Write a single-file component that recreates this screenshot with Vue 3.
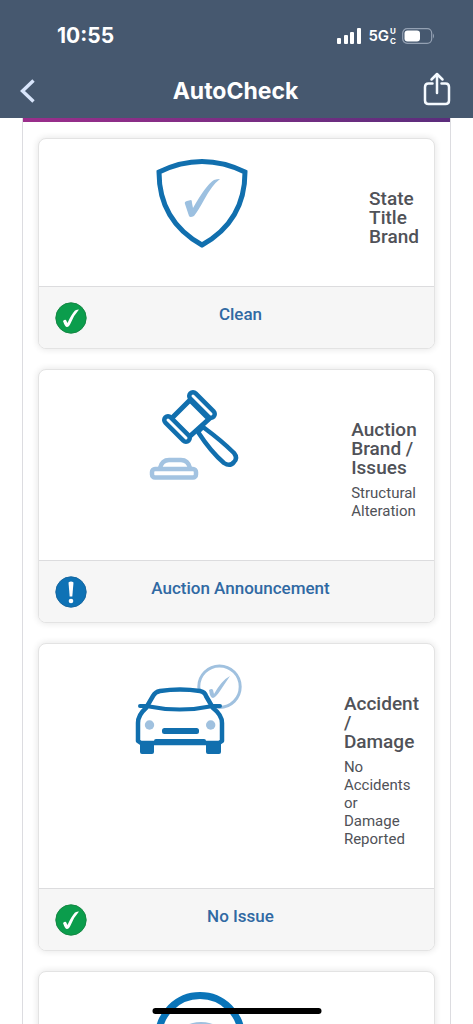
<script setup>
const cards = [
  { icon: 'shield', title: 'State Title Brand', detail: '', status: 'Clean', ok: true },
  { icon: 'gavel', title: 'Auction Brand / Issues', detail: 'Structural Alteration', status: 'Auction Announcement', ok: false },
  { icon: 'car', title: 'Accident / Damage', detail: 'No Accidents or Damage Reported', status: 'No Issue', ok: true },
  { icon: 'gauge' }
]
</script>

<template>
  <div class="screen">
    <header class="header">
      <div class="statusbar">
        <span class="time">10:55</span>
        <div class="indicators">
          <svg class="signal" viewBox="0 0 24 16" aria-hidden="true">
            <rect x="0" y="10" width="4" height="6" rx="1" />
            <rect x="7" y="7" width="4" height="9" rx="1" />
            <rect x="13" y="4" width="4" height="12" rx="1" />
            <rect x="20" y="0" width="4" height="16" rx="1" />
          </svg>
          <span class="network">5G</span>
          <span class="band"><span>U</span><span>C</span></span>
          <svg class="battery" viewBox="0 0 34 16" aria-hidden="true">
            <rect x="0.7" y="0.7" width="29" height="14.6" rx="4.5" fill="none" stroke="#94a1b3" stroke-width="1.2" />
            <rect x="2.5" y="2.5" width="15.5" height="11" rx="3" fill="#fff" />
            <path d="M31 5.5Q33 8 31 10.5Z" fill="#94a1b3" />
          </svg>
        </div>
      </div>
      <nav class="navbar">
        <button class="navbtn" type="button" aria-label="Back">
          <svg class="chevron" viewBox="0 0 16 24"><path d="M13.5 1.5L2.5 12L13.5 22.5" fill="none" stroke="#d8e5fb" stroke-width="3.4" /></svg>
        </button>
        <h1 class="heading">AutoCheck</h1>
        <button class="navbtn end" type="button" aria-label="Share">
          <svg class="share" viewBox="0 0 28 34">
            <g fill="none" stroke="#f5faff" stroke-width="2.5" stroke-linecap="round" stroke-linejoin="round">
              <path d="M9.5 11.5H5.5Q2 11.5 2 15V28.5Q2 32 5.5 32H22.5Q26 32 26 28.5V15Q26 11.5 22.5 11.5H18.5" />
              <path d="M14 21V2M8.5 7.5L14 2L19.5 7.5" />
            </g>
          </svg>
        </button>
      </nav>
    </header>

    <main class="panel">
      <section v-for="card in cards" :key="card.icon" class="card">
        <div class="body" :class="{ plain: !card.title }">
          <div class="picture">
            <svg v-if="card.icon === 'shield'" class="icon" viewBox="0 0 110 104" aria-hidden="true">
              <path d="M12 24Q55 3 98 24Q98 73 55 97Q12 73 12 24Z" fill="none" stroke="#116fae" stroke-width="5" />
              <path d="M38 56Q37 54 40 53L44 52Q45 52 45 55L46 60Q59 37 67 32Q70 31 73 31Q65 37 57 52Q51 63 47 68Q43 70 42 68Z" fill="#9cc0e0" />
            </svg>
            <svg v-else-if="card.icon === 'gavel'" class="icon" viewBox="0 0 110 104" aria-hidden="true">
              <path d="M60 53L65 48Q84 62 96 74Q100 79 96 83Q92 88 86 84Q73 73 60 53Z" fill="#fff" stroke="#116fae" stroke-width="4.5" stroke-linejoin="round" />
              <path d="M52 21L71 40L51 58L33 40Z" fill="#fff" stroke="#116fae" stroke-width="5" />
              <g fill="none" stroke-linecap="round">
                <path d="M55 17L73 35M30 41L48 59" stroke="#116fae" stroke-width="12" />
                <path d="M55 17L73 35M30 41L48 59" stroke="#fff" stroke-width="3" />
              </g>
              <g fill="none" stroke="#a3c3e1" stroke-width="4.5">
                <rect x="14" y="90" width="44" height="8.5" rx="3" />
                <path d="M22 89Q24 81 31 81H43Q50 81 52 89" />
              </g>
            </svg>
            <svg v-else-if="card.icon === 'car'" class="icon" viewBox="0 0 110 104" aria-hidden="true">
              <circle cx="85.5" cy="33.7" r="20.7" fill="none" stroke="#a0c1df" stroke-width="3" />
              <path d="M75 37Q78 35 79 37L80 41Q88 27 96 23Q92 29 86 38Q82 44 79 45Q76 45 75 37Z" fill="#a0c1df" />
              <path d="M12 55Q4 62 4 70V88L7 90H85L88 88V70Q88 62 79 55L72 43Q71 39 66 38Q46 35 26 38Q21 39 19 43Z" fill="#fff" stroke="#116fae" stroke-width="4.5" stroke-linejoin="round" />
              <path d="M6 53H12Q46 60 79 53H86" fill="none" stroke="#116fae" stroke-width="4" stroke-linecap="round" stroke-linejoin="round" />
              <rect x="28" y="75" width="37" height="6" rx="2.5" fill="#116fae" />
              <rect x="20" y="86" width="52" height="6" rx="2" fill="#116fae" />
              <path d="M6 89H20V99Q20 101 18 101H8Q6 101 6 99ZM72 89H87V99Q87 101 85 101H74Q72 101 72 99Z" fill="#116fae" />
              <circle cx="15.5" cy="72" r="4.7" fill="#a0c1df" />
              <circle cx="76.7" cy="72" r="4.7" fill="#a0c1df" />
            </svg>
            <svg v-else class="icon" viewBox="0 0 110 104" aria-hidden="true">
              <circle cx="55" cy="56" r="41.5" fill="none" stroke="#0a74b8" stroke-width="7" />
              <ellipse cx="56" cy="56" rx="24" ry="15" fill="#a0c1df" />
            </svg>
          </div>
          <div v-if="card.title" class="copy">
            <h2 class="title">{{ card.title }}</h2>
            <p v-if="card.detail" class="detail">{{ card.detail }}</p>
          </div>
        </div>
        <footer v-if="card.status" class="footer">
          <svg class="badge" viewBox="0 0 32 32" aria-hidden="true">
            <template v-if="card.ok">
              <circle cx="16" cy="16" r="15.2" fill="#0b9d4c" stroke="#168744" stroke-width="1" />
              <path d="M8 19Q10 17 11 18L12.5 21Q16 13 20 8.5Q22 7.5 24 7.5Q19 13 16 20.5Q14 25 12 25Q10 25 8 19Z" fill="#fff" />
            </template>
            <template v-else>
              <circle cx="16" cy="16" r="15.2" fill="#0e72b5" stroke="#1767a0" stroke-width="1" />
              <path d="M13.5 6.5Q16 4.5 18.5 6.5L17.3 20.5H14.7Z" fill="#fff" />
              <circle cx="16" cy="25" r="2.3" fill="#fff" />
            </template>
          </svg>
          <a class="status" href="#">{{ card.status }}</a>
        </footer>
      </section>
    </main>
    <div class="home"></div>
  </div>
</template>

<style>
body { margin: 0; background: #fff; }
</style>

<style scoped>
.screen { position: relative; height: 100vh; overflow: hidden; background: #fff; font-family: Roboto, sans-serif; }
.header { box-sizing: border-box; height: 118px; padding-top: 20px; background: #46586f; color: #fff; font-family: Inter, sans-serif; }
.statusbar { display: flex; align-items: center; justify-content: space-between; height: 32px; padding: 0 37px 0 57px; }
.time { font-size: 21px; font-weight: 700; line-height: 24px; }
.indicators { display: flex; align-items: center; }
.signal { width: 24px; height: 16px; margin-right: 7px; fill: #fff; }
.network { font-size: 15px; font-weight: 600; line-height: 20px; }
.band { display: flex; flex-direction: column; margin: 0 6px 0 1px; font-size: 8px; font-weight: 700; line-height: 10px; }
.battery { width: 34px; height: 16px; }
.navbar { display: grid; grid-template-columns: 1fr auto 1fr; align-items: center; height: 66px; padding: 4px 22px 0 20px; box-sizing: border-box; margin-top: 4px; }
.navbtn { display: flex; justify-self: start; padding: 0; border: 0; background: none; }
.end { justify-self: end; padding-bottom: 4px; }
.chevron { width: 16px; height: 24px; }
.share { width: 28px; height: 34px; }
.heading { margin: 0; font-size: 23px; font-weight: 700; line-height: 30px; }
.panel { margin: 0 22px; padding: 16px 15px 0; border: 1px solid #dcdce0; border-top: 0; min-height: 100%; }
.panel::before { content: ""; display: block; height: 4px; margin: -16px -15px 16px; background: linear-gradient(90deg, #9b2e8b, #5b2d7c); }
.card { margin-bottom: 20px; border: 1px solid #e3e3e3; border-radius: 8px; background: #fff; box-shadow: 0 0 6px 1px rgba(0, 0, 0, 0.09); overflow: hidden; }
.body { display: flex; align-items: flex-start; }
.plain { padding-right: 70px; min-height: 148px; }
.picture { flex: 1; display: flex; justify-content: center; padding: 9px 4px 0 0; }
.icon { width: 110px; height: 104px; }
.copy { width: min-content; padding: 50px 15px 40px 0; color: #505258; }
.title { margin: 0; font-size: 19px; font-weight: 500; line-height: 19px; }
.detail { margin: 7px 0 0; padding-right: 3px; font-size: 15px; line-height: 18px; }
.footer { display: flex; align-items: flex-start; box-sizing: border-box; height: 62px; padding: 15px 40px 0 16px; border-top: 1px solid #dcdcde; background: #f6f6f6; }
.badge { width: 32px; height: 32px; }
.status { flex: 1; padding-top: 2px; color: #3069a3; font-size: 17px; font-weight: 500; line-height: 20px; text-align: center; text-decoration: none; }
.home { position: absolute; bottom: 10px; left: 50%; width: 169px; height: 6px; border-radius: 3px; background: #000; transform: translateX(-50%); }
</style>
